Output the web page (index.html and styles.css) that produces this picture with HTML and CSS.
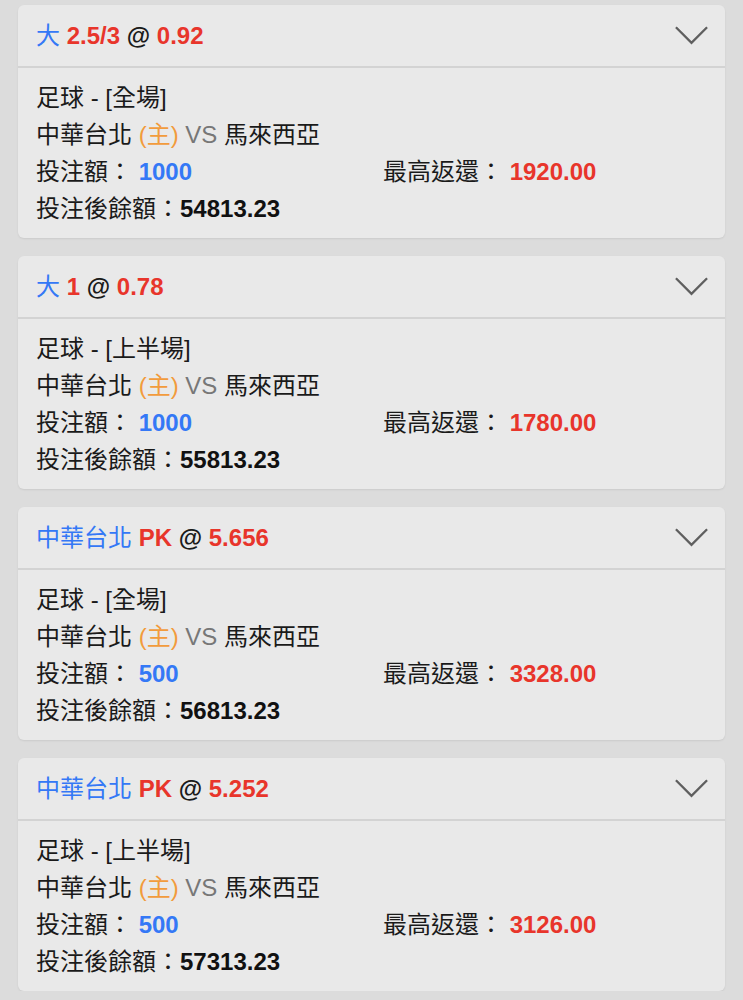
FILE: index.html
```html
<!DOCTYPE html>
<html lang="zh-Hant">
<head>
    <meta charset="UTF-8">
    <meta name="viewport" content="width=device-width, initial-scale=1.0">
    <title>注單</title>
    <link rel="stylesheet" href="styles.css">
</head>
<body>
    <div class="bet-list">

        <!-- 注單 1 -->
        <div class="bet-card">
            <div class="bet-head">
                <div class="bet-title">
                    <span class="blue">大</span> <span class="red">2.5/3</span> @ <span class="red">0.92</span>
                </div>
                <svg class="chevron" viewBox="0 0 36 20"><polyline points="2,2 18,18 34,2"/></svg>
            </div>
            <div class="bet-body">
                <div class="row">足球 - [全場]</div>
                <div class="row">中華台北 <span class="orange">(主)</span> <span class="gray">VS</span> 馬來西亞</div>
                <div class="row split">
                    <div>投注額： <span class="num blue">1000</span></div>
                    <div>最高返還： <span class="num red">1920.00</span></div>
                </div>
                <div class="row">投注後餘額：<span class="num">54813.23</span></div>
            </div>
        </div>

        <!-- 注單 2 -->
        <div class="bet-card">
            <div class="bet-head">
                <div class="bet-title">
                    <span class="blue">大</span> <span class="red">1</span> @ <span class="red">0.78</span>
                </div>
                <svg class="chevron" viewBox="0 0 36 20"><polyline points="2,2 18,18 34,2"/></svg>
            </div>
            <div class="bet-body">
                <div class="row">足球 - [上半場]</div>
                <div class="row">中華台北 <span class="orange">(主)</span> <span class="gray">VS</span> 馬來西亞</div>
                <div class="row split">
                    <div>投注額： <span class="num blue">1000</span></div>
                    <div>最高返還： <span class="num red">1780.00</span></div>
                </div>
                <div class="row">投注後餘額：<span class="num">55813.23</span></div>
            </div>
        </div>

        <!-- 注單 3 -->
        <div class="bet-card">
            <div class="bet-head">
                <div class="bet-title">
                    <span class="blue">中華台北</span> <span class="red">PK</span> @ <span class="red">5.656</span>
                </div>
                <svg class="chevron" viewBox="0 0 36 20"><polyline points="2,2 18,18 34,2"/></svg>
            </div>
            <div class="bet-body">
                <div class="row">足球 - [全場]</div>
                <div class="row">中華台北 <span class="orange">(主)</span> <span class="gray">VS</span> 馬來西亞</div>
                <div class="row split">
                    <div>投注額： <span class="num blue">500</span></div>
                    <div>最高返還： <span class="num red">3328.00</span></div>
                </div>
                <div class="row">投注後餘額：<span class="num">56813.23</span></div>
            </div>
        </div>

        <!-- 注單 4 -->
        <div class="bet-card">
            <div class="bet-head">
                <div class="bet-title">
                    <span class="blue">中華台北</span> <span class="red">PK</span> @ <span class="red">5.252</span>
                </div>
                <svg class="chevron" viewBox="0 0 36 20"><polyline points="2,2 18,18 34,2"/></svg>
            </div>
            <div class="bet-body">
                <div class="row">足球 - [上半場]</div>
                <div class="row">中華台北 <span class="orange">(主)</span> <span class="gray">VS</span> 馬來西亞</div>
                <div class="row split">
                    <div>投注額： <span class="num blue">500</span></div>
                    <div>最高返還： <span class="num red">3126.00</span></div>
                </div>
                <div class="row">投注後餘額：<span class="num">57313.23</span></div>
            </div>
        </div>

    </div>
</body>
</html>
```

FILE: styles.css
```css
/* Grundlayout */
* {
    margin: 0;
    padding: 0;
    box-sizing: border-box;
}

body {
    font-family: "Liberation Sans", "Noto Sans CJK TC", sans-serif;
    background-color: #dcdcdc;
    color: #1a1a1a;
    font-size: 24px;
}

.bet-list {
    display: flex;
    flex-direction: column;
    gap: 18px;
    padding: 5px 18px 0 18px;
}

.bet-card {
    background-color: #e9e9e9;
    border-radius: 6px;
    box-shadow: 0 1px 2px rgba(0, 0, 0, 0.08);
    overflow: hidden;
}

/* Kopfzeile */
.bet-head {
    height: 63px;
    display: flex;
    align-items: center;
    justify-content: space-between;
    padding: 0 16px 0 18px;
    border-bottom: 2px solid #d3d3d3;
}

.bet-title {
    font-weight: bold;
    font-size: 24px;
    margin-top: -5px;
}

.bet-title .blue {
    font-weight: normal;
}

.chevron {
    width: 35px;
    height: 20px;
    margin-top: -2px;
    fill: none;
    stroke: #5f5f5f;
    stroke-width: 2.4;
}

/* Inhalt */
.bet-body {
    padding: 11px 18px 11px 18px;
}

.row {
    height: 37px;
    line-height: 37px;
    white-space: nowrap;
}

.split {
    display: grid;
    grid-template-columns: 347px 1fr;
}

.num {
    font-weight: bold;
    color: #111;
}

.blue {
    color: #3478f6;
}

.red {
    color: #e8352b;
}

.num.blue {
    color: #3478f6;
}

.num.red {
    color: #e8352b;
}

.orange {
    color: #f29b3c;
}

.gray {
    color: #777;
}
```
